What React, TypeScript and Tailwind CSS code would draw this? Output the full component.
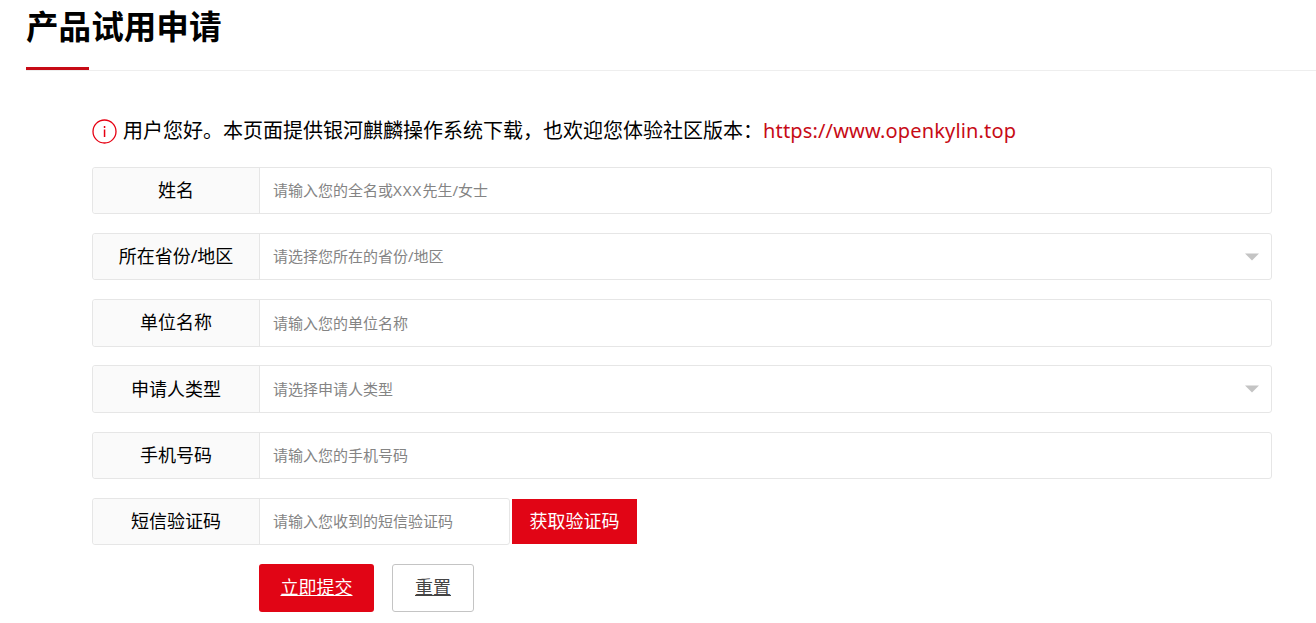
const FONT = 'font-["Noto_Sans","Noto_Sans_CJK_SC",sans-serif]'

function Caret() {
  return (
    <svg width="14" height="8" viewBox="0 0 14 8" className="absolute right-[12px] top-[19px]">
      <path d="M0 0.5h14L7 7.5z" fill="#c4c4c4" />
    </svg>
  )
}

function Row({ label, placeholder, select }: { label: React.ReactNode; placeholder: React.ReactNode; select?: boolean }) {
  return (
    <div className="relative flex h-[47.4px] rounded-[3px] border border-[#e6e6e6]">
      <div className="flex w-[167px] shrink-0 items-center justify-center rounded-l-[3px] border-r border-[#e6e6e6] bg-[#fafafa] text-[18px] text-black">
        {label}
      </div>
      <div className="flex flex-1 items-center pl-[13px] text-[15px] text-[#848484]">{placeholder}</div>
      {select && <Caret />}
    </div>
  )
}

export default function App() {
  return (
    <div className={`${FONT} h-[623px] w-[1316px] overflow-hidden bg-white`}>
      <header className="ml-[26px] h-[71px] border-b border-[#eeeeee]">
        <h1 className="relative h-[70px] w-[63px] whitespace-nowrap border-b-[3px] border-[#c70b16] pt-[5px] text-[32.6px] font-bold leading-[44px] text-black">
          产品试用申请
        </h1>
      </header>

      <div className="ml-[92px] w-[1180px]">
        <p className="mt-[45px] flex h-[30px] items-center whitespace-nowrap text-[20px] text-black">
          <svg width="25" height="25" viewBox="0 0 25 25" className="mr-[6px] ml-0 shrink-0">
            <circle cx="12.5" cy="12.5" r="11.5" fill="none" stroke="#e60012" strokeWidth="1.3" />
            <rect x="11.8" y="7" width="1.5" height="2" fill="#e60012" />
            <rect x="11.8" y="10.5" width="1.5" height="7.5" fill="#e60012" />
          </svg>
          用户您好。本页面提供银河麒麟操作系统下载，也欢迎您体验社区版本：
          <span className="tracking-[0.16px] text-[#c70b16]">https://www.openkylin.top</span>
        </p>

        <div className="mt-[20.8px] flex flex-col gap-[18.8px]">
          <Row
            label="姓名"
            placeholder={
              <>
                请输入您的全名或<span className="tracking-[1px]">XXX</span>先生/女士
              </>
            }
          />
          <Row label="所在省份/地区" placeholder="请选择您所在的省份/地区" select />
          <Row label="单位名称" placeholder="请输入您的单位名称" />
          <Row label="申请人类型" placeholder="请选择申请人类型" select />
          <Row label="手机号码" placeholder="请输入您的手机号码" />

          <div className="flex h-[47.4px] items-stretch">
            <div className="flex w-[418px] rounded-[3px] border border-[#e6e6e6]">
              <div className="flex w-[167px] shrink-0 items-center justify-center rounded-l-[3px] border-r border-[#e6e6e6] bg-[#fafafa] text-[18px] text-black">
                短信验证码
              </div>
              <div className="flex flex-1 items-center pl-[13px] text-[15px] text-[#848484]">请输入您收到的短信验证码</div>
            </div>
            <button className="ml-[2px] my-[1px] w-[125px] bg-[#e10515] text-[18px] text-white">获取验证码</button>
          </div>
        </div>

        <div className="mt-[18.8px] ml-[167px] flex gap-[18px]">
          <button className="h-[48px] w-[115px] rounded-[3px] bg-[#e10515] text-[18px] text-white underline">立即提交</button>
          <button className="h-[48px] w-[82px] rounded-[3px] border border-[#c4c4c4] bg-white text-[18px] text-[#444444] underline">重置</button>
        </div>
      </div>
    </div>
  )
}
